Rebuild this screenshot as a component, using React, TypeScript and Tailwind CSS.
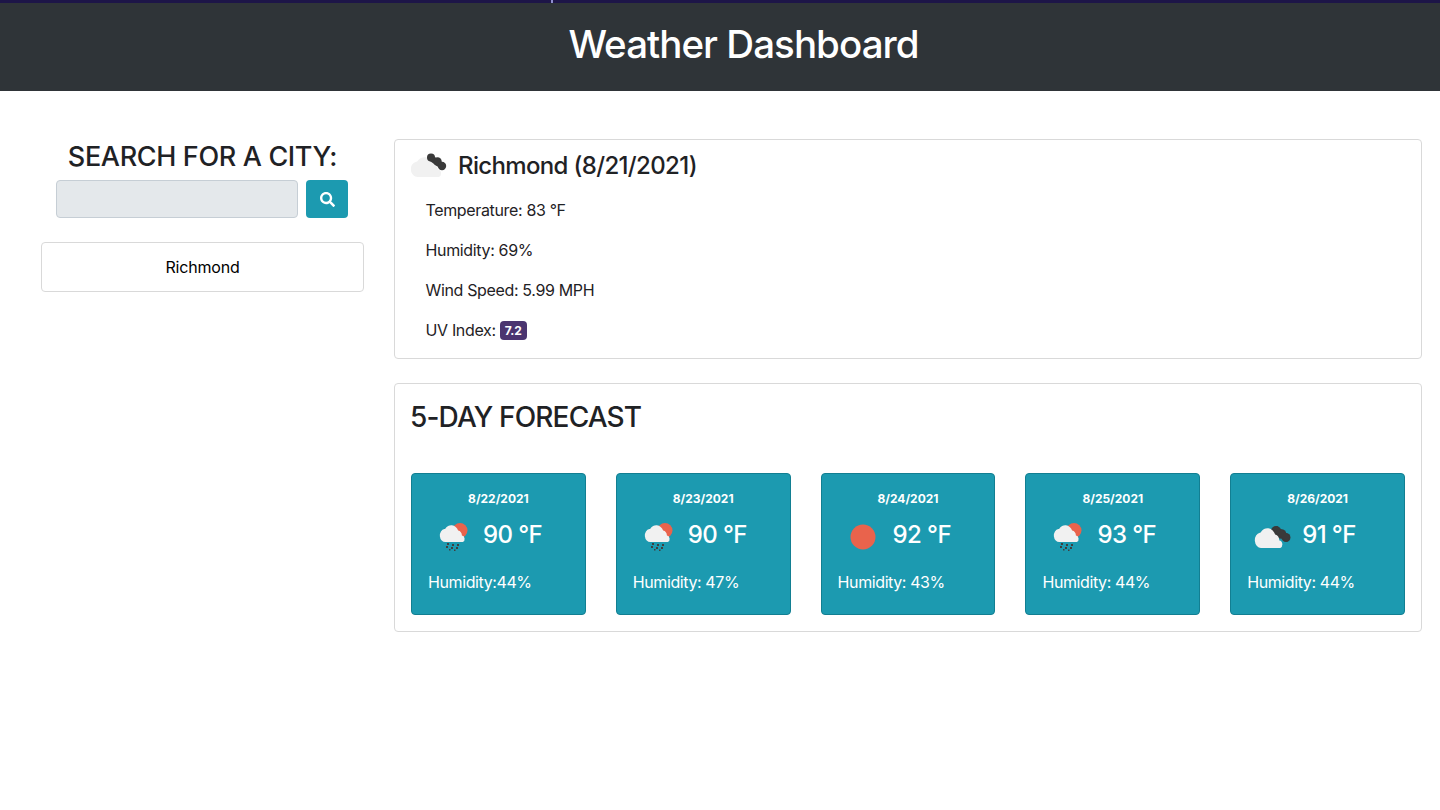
import { FaSearch } from 'react-icons/fa';

function Cloud({ x, y, w, h, fill }: { x: number; y: number; w: number; h: number; fill: string }) {
  return (
    <g transform={`translate(${x} ${y}) scale(${w / 32} ${h / 16})`}>
      <path d="M6.5 16A6.5 6.5 0 0 1 5.2 3.1 L6 3 A9 9 0 0 1 21.5 4.6 A5.6 5.6 0 0 1 26 9.6 L26 9.6 A3.3 3.3 0 0 1 27 16 Z" fill={fill} />
    </g>
  );
}

function RainIcon() {
  return (
    <svg width="50" height="50" viewBox="0 0 50 50" className="shrink-0">
      <circle cx="32" cy="20.5" r="7.5" fill="#e9634c" />
      <Cloud x={12} y={16} w={27} h={16} fill="#f1f1f1" />
      <g fill="#3f3f3f">
        <rect x="19" y="33" width="2" height="2" />
        <rect x="24" y="34" width="2" height="2" />
        <rect x="29" y="34" width="2" height="2" />
        <rect x="18" y="36" width="2" height="2" />
        <rect x="23" y="37" width="2" height="2" />
        <rect x="28" y="37" width="2" height="2" />
        <rect x="21" y="39" width="1.5" height="1.5" />
        <rect x="26" y="39.5" width="1.5" height="1.5" />
      </g>
    </svg>
  );
}

function SunIcon() {
  return (
    <svg width="50" height="50" viewBox="0 0 50 50" className="shrink-0">
      <circle cx="25" cy="27" r="12.5" fill="#e9634c" />
    </svg>
  );
}

function CloudsIcon() {
  return (
    <svg width="50" height="50" viewBox="0 0 50 50" className="shrink-0">
      <g fill="#3a3a3a">
        <circle cx="29" cy="21" r="5" />
        <circle cx="34.5" cy="24" r="4.8" />
        <circle cx="39" cy="27.5" r="4.5" />
        <path d="M25 19 L30 16 L43 26 L40 32 Z" />
      </g>
      <Cloud x={8} y={19} w={30} h={19} fill="#f1f1f1" />
    </svg>
  );
}

function MainIcon() {
  return (
    <svg width="47" height="46" viewBox="0 0 47 46" className="shrink-0">
      <Cloud x={0} y={15} w={33} h={19} fill="#f1f1f1" />
      <path d="M20 15 L31 23" stroke="#3a3a3a" strokeWidth="6" strokeLinecap="round" />
      <g fill="#3a3a3a">
        <circle cx="20" cy="14.5" r="4" />
        <circle cx="26.5" cy="18.5" r="4.2" />
        <circle cx="31" cy="23" r="4.2" />
      </g>
    </svg>
  );
}

const forecast = [
  { date: '8/22/2021', temp: '90 °F', humidity: 'Humidity:44%', icon: <RainIcon /> },
  { date: '8/23/2021', temp: '90 °F', humidity: 'Humidity: 47%', icon: <RainIcon /> },
  { date: '8/24/2021', temp: '92 °F', humidity: 'Humidity: 43%', icon: <SunIcon /> },
  { date: '8/25/2021', temp: '93 °F', humidity: 'Humidity: 44%', icon: <RainIcon /> },
  { date: '8/26/2021', temp: '91 °F', humidity: 'Humidity: 44%', icon: <CloudsIcon /> },
];

export default function App() {
  return (
    <div className="relative min-h-[810px] bg-white font-['Inter',sans-serif] text-[#1f2225]">
      <header className="flex h-[91px] items-center justify-center border-t-[3px] border-[#1d1548] bg-[#2f3438] pb-[5px] pl-[47px]">
        <h1 className="text-[38.5px] font-medium leading-none tracking-[-0.95px] text-white">Weather Dashboard</h1>
      </header>
      <span className="absolute left-[551px] top-0 h-[3px] w-[2px] bg-[#8f8fd0]" />

      <main className="flex gap-[30px] pl-[41px] pr-[18px] pt-[48px]">
        <aside className="w-[323px] shrink-0">
          <h2 className="mt-[2px] text-center text-[27px] font-medium leading-[32px] tracking-[-0.35px]">SEARCH FOR A CITY:</h2>
          <div className="mt-[7px] flex justify-center gap-2 pr-[1px]">
            <input className="h-[38px] w-[242px] rounded border border-[#c6ced5] bg-[#e4e8eb]" />
            <button className="flex h-[38px] w-[42px] items-center justify-center rounded bg-[#1c9ab0] text-white">
              <FaSearch size={15} />
            </button>
          </div>
          <div className="mt-[24px] flex h-[50px] items-center justify-center rounded border border-[#d9d9d9] text-[16px] tracking-[-0.2px] text-black">
            Richmond
          </div>
        </aside>

        <section className="flex min-w-0 flex-1 flex-col gap-[24px]">
          <div className="h-[220px] rounded border border-[#d9d9d9] px-4 pt-[3px]">
            <div className="flex items-center">
              <MainIcon />
              <h2 className="text-[24px] font-medium leading-[46px] tracking-[-0.65px]">Richmond (8/21/2021)</h2>
            </div>
            <div className="flex flex-col gap-4 pl-[14.5px] pt-[9px] text-[16px] leading-[24px] tracking-[-0.35px]">
              <p>Temperature: 83 °F</p>
              <p>Humidity: 69%</p>
              <p>Wind Speed: 5.99 MPH</p>
              <p className="flex items-center gap-1">
                UV Index:
                <span className="rounded bg-[#4b3570] px-[5px] py-[2px] text-[12px] font-bold leading-[15px] tracking-normal text-white">7.2</span>
              </p>
            </div>
          </div>

          <div className="h-[249px] rounded border border-[#d9d9d9] px-4 pt-[16px]">
            <h2 className="-ml-[1px] text-[28px] font-medium leading-[34px] tracking-[-0.85px]">5-DAY FORECAST</h2>
            <div className="mt-[39px] grid grid-cols-5 gap-[30px]">
              {forecast.map((day) => (
                <div key={day.date} className="h-[142px] rounded border border-[#127f92] bg-[#1c9ab0] px-4 pt-[16px] text-white">
                  <div className="text-center text-[12px] font-bold leading-[18px]">{day.date}</div>
                  <div className="mt-[2px] flex items-center gap-[5px]">
                    {day.icon}
                    <span className="text-[24px] font-medium leading-[50px] tracking-[-0.6px]">{day.temp}</span>
                  </div>
                  <div className="mt-[10px] text-[16px] leading-[24px] tracking-[-0.4px]">{day.humidity}</div>
                </div>
              ))}
            </div>
          </div>
        </section>
      </main>
    </div>
  );
}
